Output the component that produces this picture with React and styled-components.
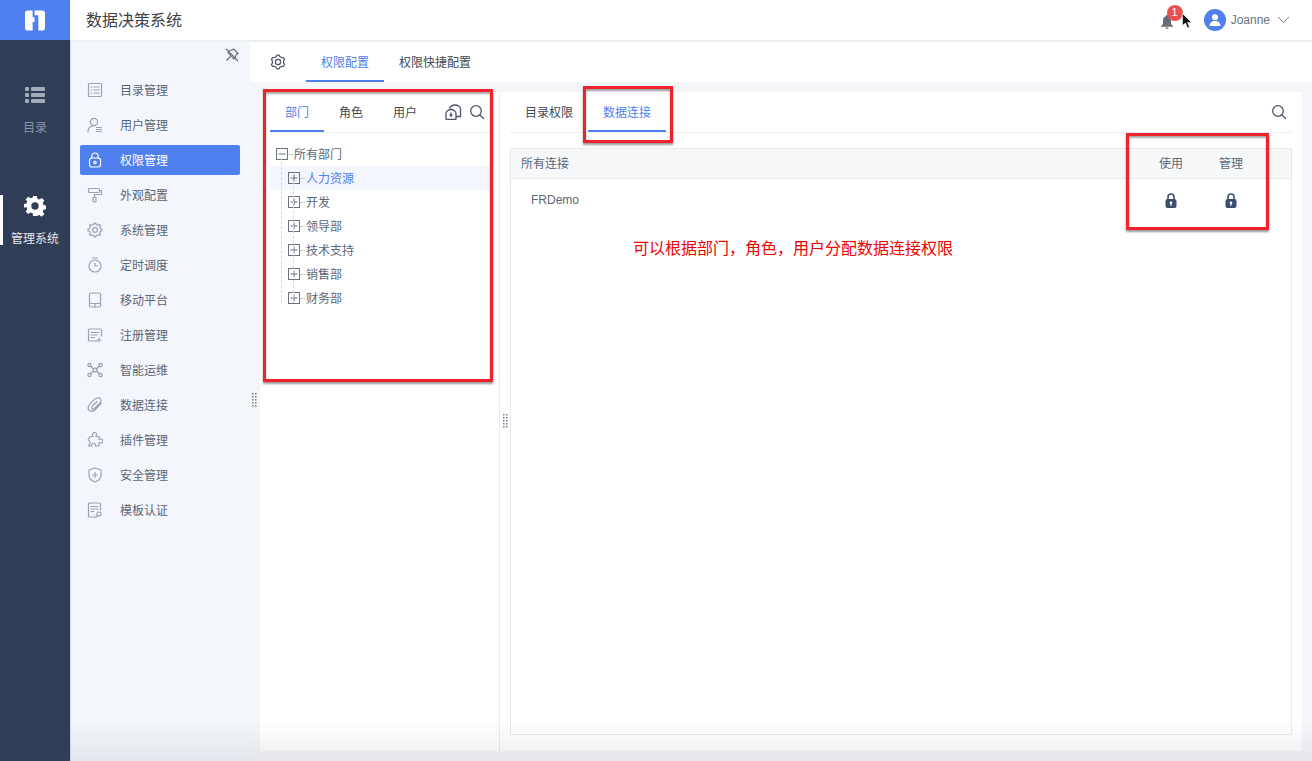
import React from "react";
import styled, { createGlobalStyle } from "styled-components";

const Global = createGlobalStyle`
  html, body { margin: 0; padding: 0; height: 100%; overflow: hidden; }
  body { font-family: "Liberation Sans", "Noto Sans CJK SC", sans-serif; font-size: 12px; color: #3d4d66; }
`;

const Page = styled.div`
  width: 1312px;
  height: 761px;
  display: flex;
  position: relative;
  overflow: hidden;
`;

const Rail = styled.aside`
  width: 70px;
  flex: none;
  background: #2f3d57;
  display: flex;
  flex-direction: column;
`;

const LogoBox = styled.div`
  height: 40px;
  background: #5080f0;
  display: flex;
  align-items: center;
  justify-content: center;
  margin-bottom: 45px;
`;

const RailItem = styled.div`
  height: 50px;
  margin-bottom: 60px;
  display: flex;
  flex-direction: column;
  align-items: center;
  color: ${(p) => (p.$active ? "#e6e9ef" : "#8c95a6")};
  border-left: 3px solid ${(p) => (p.$active ? "#fff" : "transparent")};
  padding-right: 3px;
  box-sizing: border-box;
`;

const RailIcon = styled.div`
  height: 21px;
  margin-bottom: 15px;
  svg { display: block; }
`;

const RailLabel = styled.div`
  line-height: 16px;
`;

const Main = styled.div`
  flex: 1;
  display: flex;
  flex-direction: column;
  min-width: 0;
  position: relative;
  &::after {
    content: "";
    position: absolute;
    left: 0;
    right: 0;
    bottom: 0;
    height: 40px;
    background: linear-gradient(to bottom, rgba(60, 70, 80, 0), rgba(60, 70, 80, 0.09));
    pointer-events: none;
  }
`;

const TopBar = styled.header`
  height: 40px;
  flex: none;
  background: #fff;
  display: flex;
  align-items: center;
  padding-left: 16px;
  padding-right: 22px;
  position: relative;
  z-index: 2;
  box-shadow: 0 1px 3px rgba(0, 0, 0, 0.05);
`;

const AppTitle = styled.div`
  font-size: 16px;
  color: #3a3f49;
  flex: 1;
  margin-bottom: 2px;
`;

const BellWrap = styled.div`
  position: relative;
  width: 12px;
  height: 14px;
  margin-top: 4px;
  margin-right: 31px;
`;

const Badge = styled.span`
  position: absolute;
  left: 6px;
  top: -10px;
  width: 16px;
  height: 16px;
  border-radius: 50%;
  background: #ee5050;
  color: #fff;
  font-size: 11px;
  line-height: 15px;
  text-align: center;
`;

const Cursor = styled.svg`
  position: absolute;
  left: 21px;
  top: -2px;
`;

const Avatar = styled.div`
  width: 22px;
  height: 22px;
  border-radius: 50%;
  background: #4f80ee;
  display: flex;
  align-items: center;
  justify-content: center;
  margin-right: 5px;
`;

const UserName = styled.span`
  font-size: 12px;
  color: #6b7280;
  margin-right: 7px;
`;

const Body = styled.div`
  flex: 1;
  display: flex;
  min-height: 0;
`;

const Menu = styled.nav`
  width: 180px;
  flex: none;
  background: #f3f6fb;
  border-left: 1px solid #d5dbe8;
  box-sizing: border-box;
  padding: 5px 10px 0 9px;
  position: relative;
`;

const PinRow = styled.div`
  height: 26px;
  box-sizing: border-box;
  display: flex;
  justify-content: flex-end;
  align-items: center;
  padding: 0 1px 6px 0;
  margin-bottom: 4px;
`;

const MenuItem = styled.div`
  height: 30px;
  margin-bottom: 5px;
  border-radius: 2px;
  display: flex;
  align-items: center;
  padding-left: 7px;
  color: ${(p) => (p.$active ? "#fff" : "#5b6678")};
  background: ${(p) => (p.$active ? "#5080f0" : "transparent")};
  svg { width: 16px; height: 16px; margin-right: 17px; flex: none; }
`;

const Label = styled.span`
  margin-bottom: 2px;
`;

const Grip = styled.svg`
  position: absolute;
  display: block;
`;

const MenuGrip = styled(Grip)`
  right: -7px;
  top: 353px;
`;

const Content = styled.main`
  flex: 1;
  min-width: 0;
  background: #f5f6f9;
  display: flex;
  flex-direction: column;
  padding-top: 2px;
`;

const TopTabs = styled.div`
  height: 40px;
  flex: none;
  background: #fff;
  display: flex;
  align-items: stretch;
  padding-left: 20px;
  margin-bottom: 10px;
`;

const GearSlot = styled.div`
  width: 36px;
  display: flex;
  align-items: center;
`;

const Tab = styled.div`
  padding: 0 15px;
  display: flex;
  align-items: center;
  box-sizing: border-box;
  color: ${(p) => (p.$active ? "#4f80ee" : "#3d4756")};
  border-bottom: 2px solid ${(p) => (p.$active ? "#4f80ee" : "transparent")};
`;

const Panel = styled.div`
  flex: 1;
  min-height: 0;
  margin: 0 10px 10px;
  background: #fff;
  display: flex;
`;

const LeftPane = styled.section`
  width: 240px;
  flex: none;
  box-sizing: border-box;
  padding: 0 9px 0 10px;
  border-right: 1px solid #e8eaee;
  position: relative;
`;

const SubTabs = styled.div`
  height: 40px;
  display: flex;
  align-items: stretch;
  border-bottom: 1px solid #eceef2;
`;

const SubTools = styled.div`
  margin-left: auto;
  display: flex;
  align-items: center;
  gap: 7px;
  padding-right: 5px;
`;

const PaneGrip = styled(Grip)`
  right: -9px;
  top: 322px;
`;

const Tree = styled.div`
  padding-top: 9px;
  position: relative;
`;

const TreeRow = styled.div`
  height: 24px;
  display: flex;
  align-items: center;
  padding-left: ${(p) => (p.$child ? 18 : 6)}px;
  background: ${(p) => (p.$selected ? "#f3f6fc" : "transparent")};
  color: ${(p) => (p.$selected ? "#4f80ee" : "#5b6678")};
`;

const Toggle = styled.svg`
  flex: none;
`;

const Dash = styled.span`
  width: 5px;
  border-top: 1px dashed #c8ccd4;
  margin-right: 1px;
`;

const Trunk = styled.div`
  position: absolute;
  left: ${(p) => p.$left}px;
  top: ${(p) => p.$top}px;
  height: ${(p) => p.$height}px;
  border-left: 1px dashed #d5d8de;
`;

const RightPane = styled.section`
  flex: 1;
  min-width: 0;
  padding: 0 10px 16px 10px;
  display: flex;
  flex-direction: column;
`;

const GridTable = styled.div`
  flex: 1;
  margin-top: 15px;
  border: 1px solid #e8eaee;
  position: relative;
`;

const HeadRow = styled.div`
  height: 30px;
  box-sizing: border-box;
  background: #f7f8fa;
  border-bottom: 1px solid #e8eaee;
  display: flex;
  align-items: center;
  padding: 0 30px 3px 10px;
  color: #5b6678;
`;

const DataRow = styled.div`
  height: 42px;
  display: flex;
  align-items: center;
  padding: 0 30px 0 20px;
  color: #5b6678;
`;

const NameCell = styled.div`
  flex: 1;
`;

const PermCell = styled.div`
  width: 60px;
  display: flex;
  justify-content: center;
`;

const Note = styled.div`
  position: absolute;
  left: 122px;
  top: 86px;
  font-size: 16px;
  color: #f00000;
`;

const RedBox = styled.div`
  position: absolute;
  left: ${(p) => p.$x}px;
  top: ${(p) => p.$y}px;
  width: ${(p) => p.$w}px;
  height: ${(p) => p.$h}px;
  box-sizing: border-box;
  border: 3px solid #f0222e;
  box-shadow: 0 2px 2px rgba(0, 0, 0, 0.4), inset 0 2px 2px rgba(0, 0, 0, 0.35);
  pointer-events: none;
`;

// gear outline with n blunt teeth, 16 unit box
const gearPath = (n, outer, inner) => {
  const pts = [];
  const step = (Math.PI * 2) / n;
  for (let i = 0; i < n; i++) {
    const a = i * step;
    [
      [a - step * 0.28, inner],
      [a - step * 0.16, outer],
      [a + step * 0.16, outer],
      [a + step * 0.28, inner],
    ].forEach(([t, r]) => pts.push(`${(8 + r * Math.sin(t)).toFixed(2)} ${(8 - r * Math.cos(t)).toFixed(2)}`));
  }
  return `M${pts.join("L")}Z`;
};

const line = { fill: "none", stroke: "#9aa3b4", strokeWidth: 1.2, strokeLinecap: "round", strokeLinejoin: "round" };

const Ico = ({ children, color }) => (
  <svg viewBox="0 0 16 16" {...line} stroke={color || line.stroke}>
    {children}
  </svg>
);

const icons = {
  list: (
    <>
      <rect x="1.5" y="1.5" width="13" height="13" rx="1" />
      <path d="M4 5h1M7 5h5M4 8h1M7 8h5M4 11h1M7 11h5" />
    </>
  ),
  user: (
    <>
      <circle cx="7" cy="5" r="3.6" />
      <path d="M1 15c0-3.6 2-5.5 5-6M9.5 10.5h5M9.5 12.5h5M9.5 14.5h5" />
    </>
  ),
  lock: (
    <>
      <rect x="2.5" y="6" width="11" height="9" rx="2.5" />
      <path d="M4.8 6V4.2a3.2 3.2 0 0 1 6.4 0V6" />
      <circle cx="8" cy="10.5" r="1.2" />
    </>
  ),
  roller: (
    <>
      <rect x="1.5" y="1.5" width="11" height="4" rx="1" />
      <path d="M12.5 3.5h2v4H7.5v2.5" />
      <rect x="6" y="10" width="3" height="5" rx="1" />
    </>
  ),
  gear: (
    <>
      <path d={gearPath(8, 7, 5.6)} />
      <circle cx="8" cy="8" r="2.4" />
    </>
  ),
  timer: (
    <>
      <circle cx="8" cy="9" r="6" />
      <path d="M5.5 1h5M8 6v3h2.5" />
    </>
  ),
  mobile: (
    <>
      <rect x="2.5" y="1" width="11" height="14" rx="1.5" />
      <path d="M2.5 11.5h11M8 11.5V15" />
    </>
  ),
  register: (
    <>
      <path d="M10 14H2.5a1 1 0 0 1-1-1V3a1 1 0 0 1 1-1h11a1 1 0 0 1 1 1v6" />
      <path d="M4 5.5h8M4 8h6M4 10.5h3M12 11v4M10 13h4" />
    </>
  ),
  nodes: (
    <>
      <circle cx="2.5" cy="3" r="1.6" />
      <circle cx="13.5" cy="3" r="1.6" />
      <circle cx="2.5" cy="13" r="1.6" />
      <circle cx="13.5" cy="13" r="1.6" />
      <circle cx="8" cy="8" r="1.8" />
      <path d="M3.7 4.2L6.500 7M12.3 4.2L9.500 7M3.7 11.8L6.500 9M12.3 11.8L9.500 9" strokeWidth="1.6" />
    </>
  ),
  clip: (
    <path d="M14.2 6L8.500 12.500C6.500 14.800 3 15 1.800 13.200C.5 11.300 1.500 8.500 3.500 6.300L7.500 2.300C9.500 .5 12.500 .6 13.600 2C14.600 3.500 13.600 5.500 12 7L7.500 11.500C6.500 12.500 5 12.500 4.700 11.500C4.400 10.500 5.200 9.300 6 8.500L10 4.500" />
  ),
  plugin: (
    <path d="M5.5 2.5a2 2 0 0 1 4 0c0 .8-.5 1.200-.5 2h3v3c.8 0 1-.5 1.800-.5a2 2 0 0 1 0 4c-.8 0-1-.5-1.800-.5v3.500H8.500c0-.8.3-1-.3-1.800a2 2 0 0 0-3.400 0c-.5.8-.3 1-.3 1.800H1.500l1.500-3c.6-1.200-.5-2.500-2-3l2-3.500h2.500c.5-1 0-1.500 0-2.500z" />
  ),
  shield: (
    <>
      <path d="M8 1l6 2v5c0 3.500-2.500 5.800-6 7-3.500-1.200-6-3.500-6-7V3z" />
      <path d="M8 5.500v5M5.500 8h5" />
    </>
  ),
  cert: (
    <>
      <path d="M8.500 15H2.500a1 1 0 0 1-1-1V2a1 1 0 0 1 1-1h10a1 1 0 0 1 1 1v6" />
      <path d="M4 4.500h7M4 7h7M4 9.500h3" />
      <circle cx="12" cy="12" r="2" />
      <path d="M10.500 13.500L9 15" />
    </>
  ),
};

const menu = [
  ["list", "目录管理"],
  ["user", "用户管理"],
  ["lock", "权限管理", true],
  ["roller", "外观配置"],
  ["gear", "系统管理"],
  ["timer", "定时调度"],
  ["mobile", "移动平台"],
  ["register", "注册管理"],
  ["nodes", "智能运维"],
  ["clip", "数据连接"],
  ["plugin", "插件管理"],
  ["shield", "安全管理"],
  ["cert", "模板认证"],
];

const departments = ["人力资源", "开发", "领导部", "技术支持", "销售部", "财务部"];

const GripDots = ({ as: Comp }) => (
  <Comp width="5" height="14" viewBox="0 0 5 14" fill="#6d7a90">
    {[0, 3, 6, 9, 12].map((y) => (
      <g key={y}>
        <rect x="0" y={y} width="1.5" height="1.5" />
        <rect x="3" y={y} width="1.5" height="1.5" />
      </g>
    ))}
  </Comp>
);

const SearchIcon = () => (
  <svg width="16" height="16" viewBox="0 0 16 16" fill="none" stroke="#4a5568" strokeWidth="1.3" strokeLinecap="round">
    <circle cx="7" cy="7" r="5.3" />
    <path d="M11 11l3.500 3.500" />
  </svg>
);

const BoxToggle = ({ plus }) => (
  <Toggle width="12" height="12" viewBox="0 0 12 12" fill="none" stroke="#6b7280">
    <rect x="0.5" y="0.5" width="11" height="11" />
    <path d={plus ? "M2.5 6h7M6 2.5v7" : "M2.5 6h7"} />
  </Toggle>
);

const SolidLock = () => (
  <svg width="12" height="15" viewBox="0 0 12 15">
    <path d="M3 6.5V4a3 3 0 0 1 6 0v2.5" fill="none" stroke="#3d4d6e" strokeWidth="1.6" />
    <rect x="0.5" y="6" width="11" height="9" rx="2" fill="#3d4d6e" />
    <circle cx="6" cy="9.8" r="1.3" fill="#fff" />
    <rect x="5.4" y="10" width="1.2" height="2.8" fill="#fff" />
  </svg>
);

export default function App() {
  return (
    <Page>
      <Global />
      <Rail>
        <LogoBox>
          <svg width="20" height="21" viewBox="0 0 21 21" fill="#fff">
            <path d="M0 3a3 3 0 0 1 3-3h5v7h2v5H8v9H3a3 3 0 0 1-3-3z" />
            <path d="M10 0h8a3 3 0 0 1 3 3v15a3 3 0 0 1-3 3h-4V5h-4z" />
          </svg>
        </LogoBox>
        <RailItem>
          <RailIcon>
            <svg width="20" height="20" viewBox="0 0 20 20" fill="#a3abb9">
              <rect x="0" y="2" width="4" height="4" rx="1" />
              <rect x="6" y="2" width="14" height="4" rx="1" />
              <rect x="0" y="8" width="4" height="4" rx="1" />
              <rect x="6" y="8" width="14" height="4" rx="1" />
              <rect x="0" y="14" width="4" height="4" rx="1" />
              <rect x="6" y="14" width="14" height="4" rx="1" />
            </svg>
          </RailIcon>
          <RailLabel>目录</RailLabel>
        </RailItem>
        <RailItem $active>
          <RailIcon>
            <svg width="22" height="22" viewBox="0 0 24 24" fill="#fff">
              <path
                fillRule="evenodd"
                d="M10 1h4l.6 3.100 2.100.9 2.700-1.800 2.800 2.800-1.800 2.700.9 2.100 3.100.6v4l-3.100.6-.9 2.100 1.800 2.700-2.800 2.800-2.700-1.800-2.100.9L14 23h-4l-.6-3.100-2.100-.9-2.700 1.800-2.800-2.800 1.800-2.700-.9-2.100L-.4 14v-4l3.100-.6.9-2.100L1.800 4.600l2.800-2.800 2.700 1.800 2.100-.9zM12 8a4 4 0 1 0 0 8 4 4 0 0 0 0-8z"
              />
            </svg>
          </RailIcon>
          <RailLabel>管理系统</RailLabel>
        </RailItem>
      </Rail>
      <Main>
        <TopBar>
          <AppTitle>数据决策系统</AppTitle>
          <BellWrap>
            <svg width="12" height="14" viewBox="0 0 12 14" fill="#666d78">
              <path d="M6 0a1 1 0 0 1 1 1.200c2 .5 3 2 3 4V9l2 2v.8H0V11l2-2V5.200c0-2.200 1-3.700 3-4A1 1 0 0 1 6 0z" />
              <path d="M4.500 12.400h3a1.500 1.500 0 0 1-3 0z" />
            </svg>
            <Badge>1</Badge>
            <Cursor width="10" height="16" viewBox="0 0 10 16">
              <path d="M0.5 0.5v12l3-2.500 2 5 2-1-2-4.500h4z" fill="#111" stroke="#fff" strokeWidth="0.6" />
            </Cursor>
          </BellWrap>
          <Avatar>
            <svg width="12" height="12" viewBox="0 0 12 12" fill="#fff">
              <circle cx="6" cy="3.2" r="3" />
              <path d="M0.5 12c0-3.200 2.400-5 5.500-5s5.500 1.800 5.500 5z" />
            </svg>
          </Avatar>
          <UserName>Joanne</UserName>
          <svg width="13" height="8" viewBox="0 0 13 8" fill="none" stroke="#7a8494" strokeWidth="1">
            <path d="M1 1l5.500 5.500L12 1" />
          </svg>
        </TopBar>
        <Body>
          <Menu>
            <PinRow>
              <svg width="14" height="14" viewBox="0 0 14 14" fill="none" stroke="#5b6678" strokeWidth="1.1" strokeLinejoin="round">
                <path d="M8.500 0.800l4.700 4.700-2 1-1 3-1.500 1.500L3 4.300l1.500-1.500 3-1z" />
                <path d="M1 1l12 12M5.500 8.500L1.500 12.500" />
              </svg>
            </PinRow>
            {menu.map(([icon, label, active]) => (
              <MenuItem key={label} $active={active}>
                <Ico color={active ? "#fff" : undefined}>{icons[icon]}</Ico>
                <Label>{label}</Label>
              </MenuItem>
            ))}
            <GripDots as={MenuGrip} />
          </Menu>
          <Content>
            <TopTabs>
              <GearSlot>
                <svg width="16" height="16" viewBox="0 0 16 16" fill="none" stroke="#4a5568" strokeWidth="1.2" strokeLinejoin="round">
                  <path d={gearPath(6, 7, 5.8)} />
                  <circle cx="8" cy="8" r="2.6" />
                </svg>
              </GearSlot>
              <Tab $active>权限配置</Tab>
              <Tab>权限快捷配置</Tab>
            </TopTabs>
            <Panel>
              <LeftPane>
                <SubTabs>
                  <Tab $active>部门</Tab>
                  <Tab>角色</Tab>
                  <Tab>用户</Tab>
                  <SubTools>
                    <svg width="17" height="16" viewBox="0 0 17 16" fill="none" stroke="#4a5568" strokeWidth="1.3" strokeLinejoin="round">
                      <path d="M1 15.300V9.500C1 7.500 3.500 5.500 6 5.500s5 2 5 4v5.800z" />
                      <path d="M4.500 4.500C5.500 2 7.500 1 10 1s5.500 1.500 5.500 4v7.500H11" />
                      <path d="M4 10.500h4l-2 2.800z" fill="#4a5568" stroke="none" />
                      <path d="M6 8.500v3" />
                    </svg>
                    <SearchIcon />
                  </SubTools>
                </SubTabs>
                <Tree>
                  <Trunk $left={11} $top={24} $height={146} />
                  <Trunk $left={23} $top={48} $height={122} />
                  <TreeRow>
                    <BoxToggle />
                    <Dash />
                    <Label>所有部门</Label>
                  </TreeRow>
                  {departments.map((d, i) => (
                    <TreeRow key={d} $child $selected={i === 0}>
                      <BoxToggle plus />
                      <Dash />
                      <Label>{d}</Label>
                    </TreeRow>
                  ))}
                </Tree>
                <GripDots as={PaneGrip} />
              </LeftPane>
              <RightPane>
                <SubTabs>
                  <Tab>目录权限</Tab>
                  <Tab $active>数据连接</Tab>
                  <SubTools>
                    <SearchIcon />
                  </SubTools>
                </SubTabs>
                <GridTable>
                  <HeadRow>
                    <NameCell>所有连接</NameCell>
                    <PermCell>使用</PermCell>
                    <PermCell>管理</PermCell>
                  </HeadRow>
                  <DataRow>
                    <NameCell>FRDemo</NameCell>
                    <PermCell>
                      <SolidLock />
                    </PermCell>
                    <PermCell>
                      <SolidLock />
                    </PermCell>
                  </DataRow>
                  <Note>可以根据部门，角色，用户分配数据连接权限</Note>
                </GridTable>
              </RightPane>
            </Panel>
          </Content>
        </Body>
      </Main>
      <RedBox $x={263} $y={89} $w={230} $h={293} />
      <RedBox $x={583} $y={86} $w={90} $h={57} />
      <RedBox $x={1126} $y={133} $w={143} $h={97} />
    </Page>
  );
}
